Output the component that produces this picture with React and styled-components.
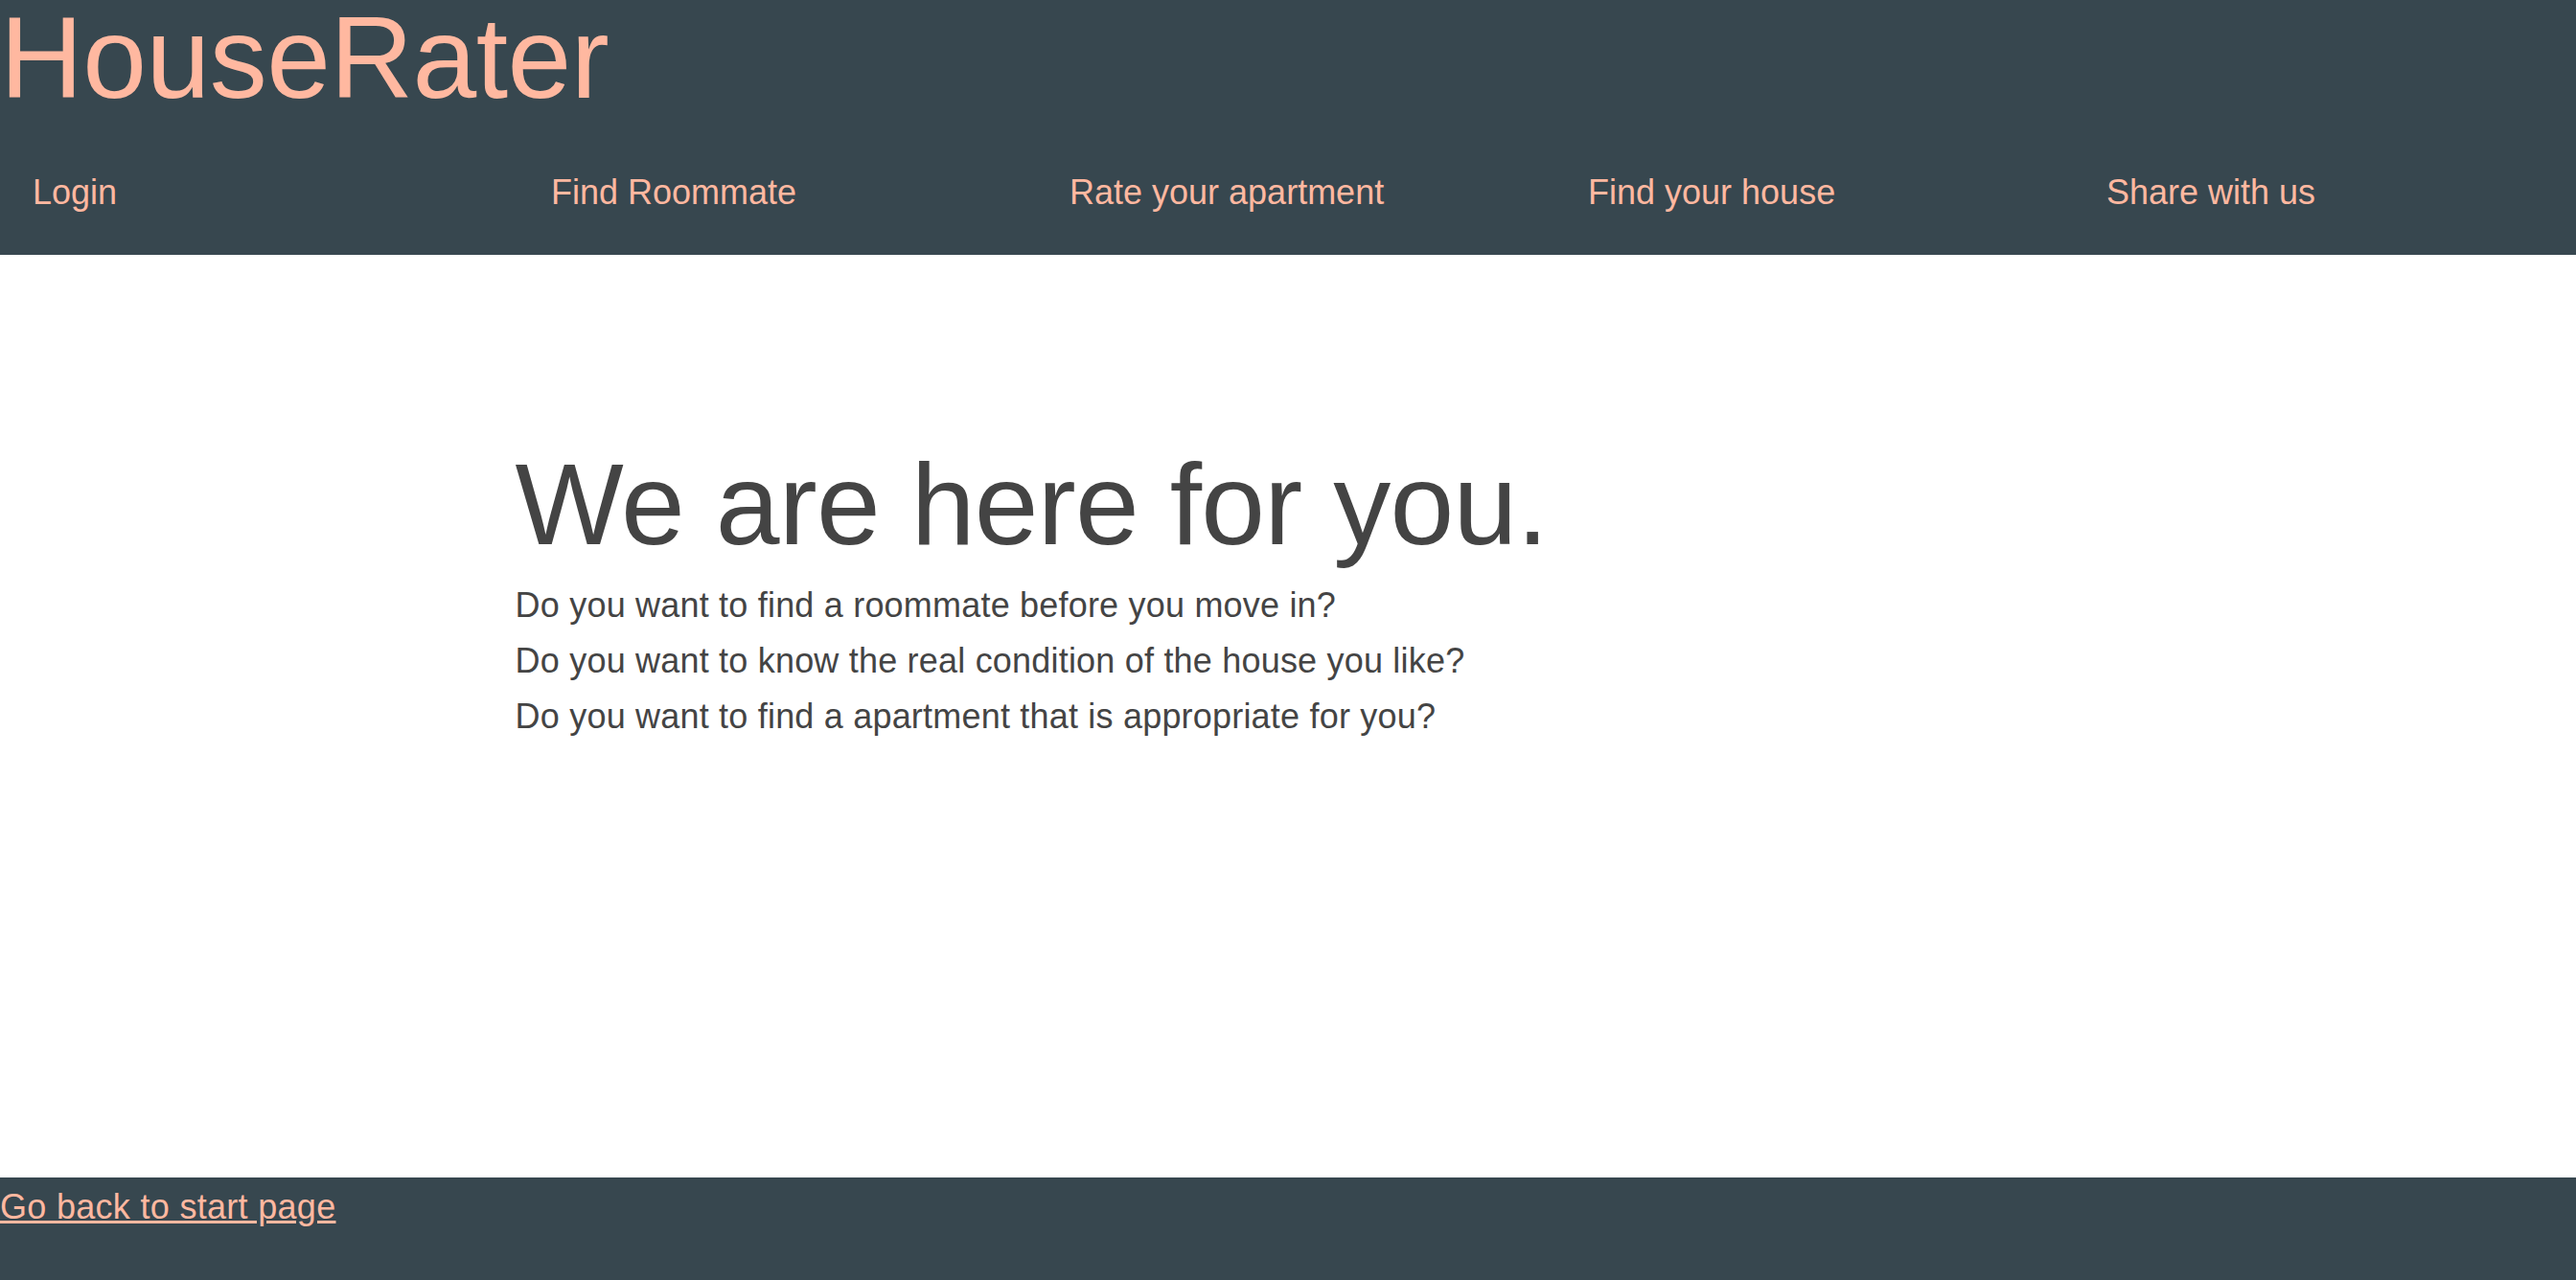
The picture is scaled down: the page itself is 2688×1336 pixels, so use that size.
import React from 'react';
import styled, { createGlobalStyle } from 'styled-components';

const GlobalStyle = createGlobalStyle`
  html, body {
    margin: 0;
    padding: 0;
    background: #ffffff;
    font-family: "Liberation Sans", Helvetica, Arial, sans-serif;
  }
`;

const Page = styled.div`
  display: flex;
  flex-direction: column;
  height: 100vh;
`;

const Header = styled.header`
  background: #37474f;
  color: #ffb8a0;
`;

const Title = styled.h1`
  margin: 0;
  font-size: 120px;
  line-height: 120px;
  letter-spacing: -0.5px;
  font-weight: normal;
  color: #ffb8a0;
`;

const Nav = styled.nav`
  display: grid;
  grid-template-columns: repeat(5, 541px);
  height: 146px;
  box-sizing: border-box;
  padding-top: 60px;
  overflow: hidden;
`;

const NavItem = styled.a`
  padding-left: 34px;
  font-size: 36px;
  color: #ffb8a0;
  text-decoration: none;
  cursor: pointer;
`;

const Main = styled.main`
  flex: 1;
  padding: 200px 0 0 20%;
  color: #444444;
`;

const Heading = styled.h2`
  margin: 0 0 17px;
  font-size: 120px;
  line-height: 120px;
  letter-spacing: -0.7px;
  font-weight: normal;
`;

const Question = styled.p`
  margin: 0;
  font-size: 36px;
  line-height: 58px;
  letter-spacing: 0.2px;
`;

const Footer = styled.footer`
  height: 107px;
  box-sizing: border-box;
  padding-top: 10px;
  background: #37474f;
`;

const BackLink = styled.a`
  font-size: 36px;
  letter-spacing: 0.3px;
  color: #ffb8a0;
  text-decoration: underline;
  cursor: pointer;
`;

const links = ['Login', 'Find Roommate', 'Rate your apartment', 'Find your house', 'Share with us'];

const questions = [
  'Do you want to find a roommate before you move in?',
  'Do you want to know the real condition of the house you like?',
  'Do you want to find a apartment that is appropriate for you?',
];

const App = () => {
  return (
    <Page>
      <GlobalStyle />
      <Header>
        <Title>HouseRater</Title>
        <Nav>
          {links.map((l) => (
            <NavItem key={l}>{l}</NavItem>
          ))}
        </Nav>
      </Header>
      <Main>
        <Heading>We are here for you.</Heading>
        {questions.map((q) => (
          <Question key={q}>{q}</Question>
        ))}
      </Main>
      <Footer>
        <BackLink>Go back to start page</BackLink>
      </Footer>
    </Page>
  );
};

export default App;
